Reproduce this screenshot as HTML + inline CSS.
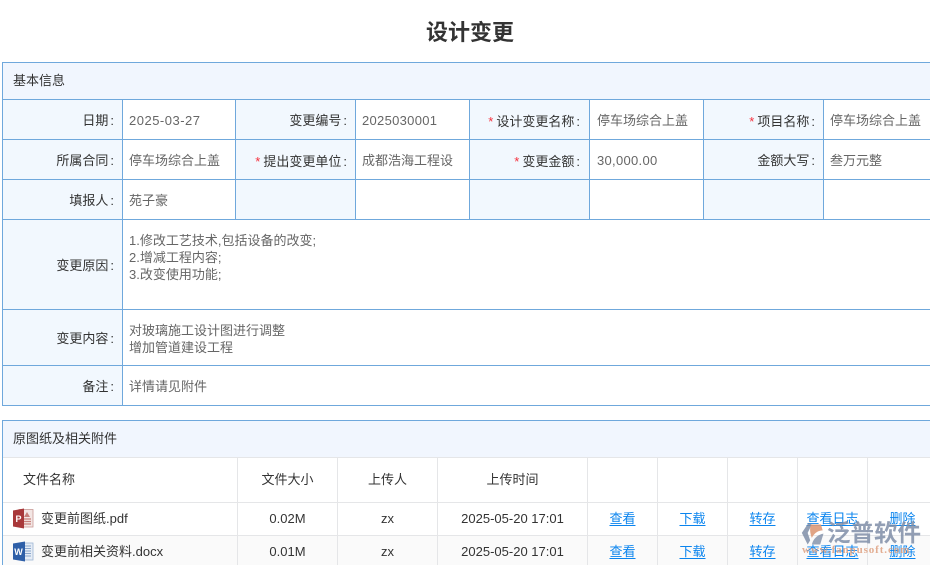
<!DOCTYPE html>
<html lang="zh"><head><meta charset="utf-8"><title>设计变更</title>
<style>
html,body{margin:0;padding:0;background:#fff}
body{width:930px;height:565px;position:relative;overflow:hidden;font:13px/18px "Liberation Sans","Noto Sans CJK SC",sans-serif;color:#333}
.b{position:absolute}
.h{background:#6fa8dc;position:absolute;height:1px}
.v{background:#6fa8dc;position:absolute;width:1px}
.g1{background:#e5e6e8}
.t{position:absolute;white-space:nowrap}
.l{text-align:right;color:#333}
.l i{color:#f5303d;font-style:normal;margin-right:3px}
.l u{text-decoration:none;padding-left:2px}
.val{color:#666}
.n{letter-spacing:.5px}
.n2{letter-spacing:.3px}
.c{text-align:center;color:#333}
a{color:#0a84ee;text-decoration:underline;text-underline-offset:2px;position:absolute;white-space:nowrap;text-align:center}
</style></head><body>
<div class="t" style="left:0;width:940px;top:18px;text-align:center;font-size:22px;line-height:30px;font-weight:bold;color:#333">设计变更</div>

<!-- top table backgrounds -->
<div class="b" style="left:2px;top:62px;width:928px;height:37px;background:#f1f6fe"></div>
<div class="b" style="left:2px;top:99px;width:120px;height:306px;background:#f2f8fe"></div>
<div class="b" style="left:236px;top:99px;width:119px;height:120px;background:#f2f8fe"></div>
<div class="b" style="left:470px;top:99px;width:119px;height:120px;background:#f2f8fe"></div>
<div class="b" style="left:704px;top:99px;width:119px;height:120px;background:#f2f8fe"></div>

<div class="h" style="left:2px;width:928px;top:62px"></div>
<div class="h" style="left:2px;width:928px;top:99px"></div>
<div class="h" style="left:2px;width:928px;top:139px"></div>
<div class="h" style="left:2px;width:928px;top:179px"></div>
<div class="h" style="left:2px;width:928px;top:219px"></div>
<div class="h" style="left:2px;width:928px;top:309px"></div>
<div class="h" style="left:2px;width:928px;top:365px"></div>
<div class="h" style="left:2px;width:928px;top:405px"></div>
<div class="v" style="left:2px;top:62px;height:344px"></div>
<div class="v" style="left:122px;top:99px;height:306px"></div>
<div class="v" style="left:235px;top:99px;height:120px"></div>
<div class="v" style="left:355px;top:99px;height:120px"></div>
<div class="v" style="left:469px;top:99px;height:120px"></div>
<div class="v" style="left:589px;top:99px;height:120px"></div>
<div class="v" style="left:703px;top:99px;height:120px"></div>
<div class="v" style="left:823px;top:99px;height:120px"></div>

<div class="t" style="left:13px;top:72px">基本信息</div>

<div class="t l" style="left:0;width:114px;top:112px">日期<u>:</u></div>
<div class="t val n" style="left:129px;top:112px">2025-03-27</div>
<div class="t l" style="left:236px;width:111px;top:112px">变更编号<u>:</u></div>
<div class="t val n2" style="left:362px;top:112px">2025030001</div>
<div class="t l" style="left:470px;width:110px;top:113px"><i>*</i>设计变更名称<u>:</u></div>
<div class="t val" style="left:597px;top:112px">停车场综合上盖</div>
<div class="t l" style="left:704px;width:111px;top:113px"><i>*</i>项目名称<u>:</u></div>
<div class="t val" style="left:830px;top:112px">停车场综合上盖</div>

<div class="t l" style="left:0;width:114px;top:152px">所属合同<u>:</u></div>
<div class="t val" style="left:129px;top:152px">停车场综合上盖</div>
<div class="t l" style="left:236px;width:111px;top:153px"><i>*</i>提出变更单位<u>:</u></div>
<div class="t val" style="left:362px;top:152px">成都浩海工程设</div>
<div class="t l" style="left:470px;width:110px;top:153px"><i>*</i>变更金额<u>:</u></div>
<div class="t val n2" style="left:597px;top:152px">30,000.00</div>
<div class="t l" style="left:704px;width:111px;top:152px">金额大写<u>:</u></div>
<div class="t val" style="left:830px;top:152px">叁万元整</div>

<div class="t l" style="left:0;width:114px;top:192px">填报人<u>:</u></div>
<div class="t val" style="left:129px;top:192px">苑子豪</div>

<div class="t l" style="left:0;width:114px;top:257px">变更原因<u>:</u></div>
<div class="t val" style="left:129px;top:232px;line-height:17px">1.修改工艺技术,包括设备的改变;<br>2.增减工程内容;<br>3.改变使用功能;</div>
<div class="t l" style="left:0;width:114px;top:330px">变更内容<u>:</u></div>
<div class="t val" style="left:129px;top:322px;line-height:17px">对玻璃施工设计图进行调整<br>增加管道建设工程</div>
<div class="t l" style="left:0;width:114px;top:378px">备注<u>:</u></div>
<div class="t val" style="left:129px;top:378px">详情请见附件</div>

<!-- bottom table -->
<div class="b" style="left:2px;top:420px;width:928px;height:37px;background:#f1f6fe"></div>
<div class="b" style="left:2px;top:536px;width:928px;height:29px;background:#fafafa"></div>
<div class="h" style="left:2px;width:928px;top:420px"></div>
<div class="v" style="left:2px;top:420px;height:145px"></div>
<div class="h g1" style="left:3px;width:927px;top:457px"></div>
<div class="h g1" style="left:3px;width:927px;top:502px"></div>
<div class="h g1" style="left:3px;width:927px;top:535px"></div>
<div class="v g1" style="left:237px;top:458px;height:107px"></div>
<div class="v g1" style="left:337px;top:458px;height:107px"></div>
<div class="v g1" style="left:437px;top:458px;height:107px"></div>
<div class="v g1" style="left:587px;top:458px;height:107px"></div>
<div class="v g1" style="left:657px;top:458px;height:107px"></div>
<div class="v g1" style="left:727px;top:458px;height:107px"></div>
<div class="v g1" style="left:797px;top:458px;height:107px"></div>
<div class="v g1" style="left:867px;top:458px;height:107px"></div>

<div class="t" style="left:13px;top:430px">原图纸及相关附件</div>
<div class="t" style="left:23px;top:471px">文件名称</div>
<div class="t c" style="left:238px;width:99px;top:471px">文件大小</div>
<div class="t c" style="left:338px;width:99px;top:471px">上传人</div>
<div class="t c" style="left:438px;width:149px;top:471px">上传时间</div>

<svg class="b" style="left:12px;top:508px" width="22" height="21" viewBox="0 0 22 21">
<rect x="7" y="1.5" width="14" height="17.5" fill="#f3e6e4" stroke="#c99a96" stroke-width=".8"/>
<path d="M12 9l3-5 3 5z" fill="#c7807b"/><path d="M11 11h8M11 13.500h8M11 16h8" stroke="#c7807b" stroke-width="1.200"/>
<path d="M1 2.500 12 .5V20.500L1 18.500z" fill="#a8383a"/>
<text x="3.500" y="14" font-size="9" font-weight="bold" fill="#fff" font-family="Liberation Sans">P</text>
</svg>
<div class="t" style="left:41px;top:510px">变更前图纸.pdf</div>
<div class="t c" style="left:238px;width:99px;top:510px">0.02M</div>
<div class="t c" style="left:338px;width:99px;top:510px">zx</div>
<div class="t c" style="left:438px;width:149px;top:510px">2025-05-20 17:01</div>
<a style="left:588px;width:69px;top:510px">查看</a>
<a style="left:658px;width:69px;top:510px">下载</a>
<a style="left:728px;width:69px;top:510px">转存</a>
<a style="left:798px;width:69px;top:510px">查看日志</a>
<a style="left:868px;width:69px;top:510px">删除</a>

<svg class="b" style="left:12px;top:541px" width="22" height="21" viewBox="0 0 22 21">
<rect x="8" y="2" width="13" height="17" fill="#e6edf6" stroke="#9db4d4" stroke-width=".8"/>
<path d="M12 5h7M12 7.500h7M12 10h7M12 12.500h7M12 15h7" stroke="#8aa6cc" stroke-width="1"/>
<path d="M1 2.500 13 .5V20.500L1 18.500z" fill="#2e5fa8"/>
<text x="2.300" y="14" font-size="9" font-weight="bold" fill="#fff" font-family="Liberation Sans">W</text>
</svg>
<div class="t" style="left:41px;top:543px">变更前相关资料.docx</div>
<div class="t c" style="left:238px;width:99px;top:543px">0.01M</div>
<div class="t c" style="left:338px;width:99px;top:543px">zx</div>
<div class="t c" style="left:438px;width:149px;top:543px">2025-05-20 17:01</div>
<a style="left:588px;width:69px;top:543px">查看</a>
<a style="left:658px;width:69px;top:543px">下载</a>
<a style="left:728px;width:69px;top:543px">转存</a>
<a style="left:798px;width:69px;top:543px">查看日志</a>
<a style="left:868px;width:69px;top:543px">删除</a>

<!-- watermark -->
<svg class="b" style="left:800px;top:522px" width="27" height="25" viewBox="0 0 30 30">
<path d="M9 1 1 13l7 14 3-5-3-9 5-10z" fill="#7f8ea8" opacity=".85"/>
<path d="M12 3h12l2 7c-5 0-10 3-13 9-2-5-3-11-1-16z" fill="#dd9a78" opacity=".9"/>
<path d="M14 24c2-5 7-9 13-10l-4 13H13z" fill="#7f8ea8" opacity=".8"/>
</svg>
<div class="t" style="left:827px;top:518px;font-size:23.500px;line-height:30px;font-weight:bold;color:#7f8ea8;opacity:.85">泛普软件</div>
<div class="t" style="left:802px;top:543px;font:bold 11px/14px 'Liberation Serif',serif;letter-spacing:.9px;color:#dd9a78;opacity:.8">www.fanpusoft.com</div>
</body></html>
